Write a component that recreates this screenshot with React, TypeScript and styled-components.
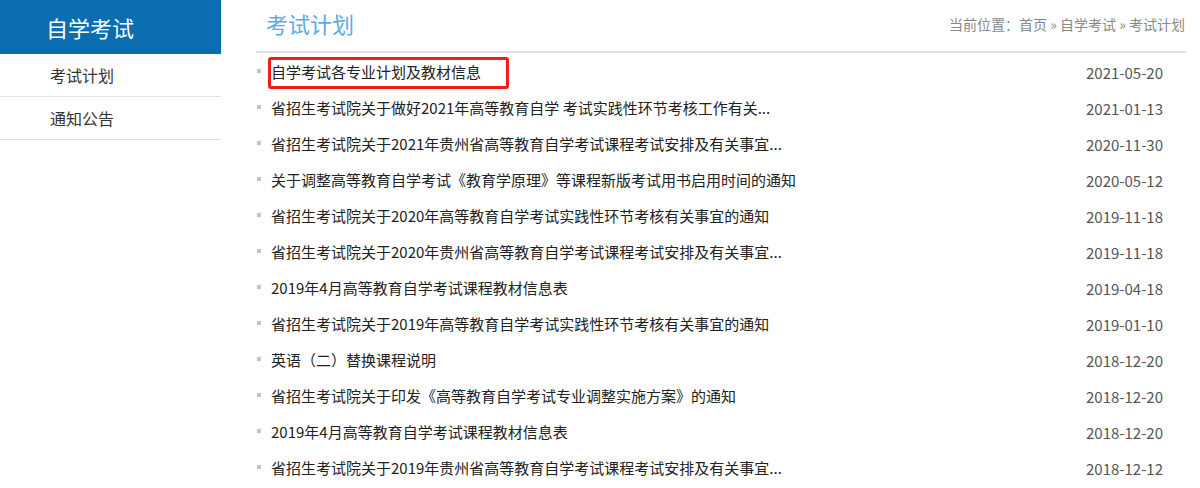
import React from "react";
import styled, { createGlobalStyle } from "styled-components";

const GlobalStyle = createGlobalStyle`
  html, body {
    margin: 0;
    padding: 0;
    background: #fff;
  }
  body {
    font-family: "Noto Sans CJK SC", "Noto Sans", sans-serif;
    color: #333;
  }
  ul {
    margin: 0;
    padding: 0;
    list-style: none;
  }
`;

const navItems = ["考试计划", "通知公告"];

const articles = [
  { title: "自学考试各专业计划及教材信息", date: "2021-05-20", marked: true },
  { title: "省招生考试院关于做好2021年高等教育自学 考试实践性环节考核工作有关...", date: "2021-01-13" },
  { title: "省招生考试院关于2021年贵州省高等教育自学考试课程考试安排及有关事宜...", date: "2020-11-30" },
  { title: "关于调整高等教育自学考试《教育学原理》等课程新版考试用书启用时间的通知", date: "2020-05-12" },
  { title: "省招生考试院关于2020年高等教育自学考试实践性环节考核有关事宜的通知", date: "2019-11-18" },
  { title: "省招生考试院关于2020年贵州省高等教育自学考试课程考试安排及有关事宜...", date: "2019-11-18" },
  { title: "2019年4月高等教育自学考试课程教材信息表", date: "2019-04-18" },
  { title: "省招生考试院关于2019年高等教育自学考试实践性环节考核有关事宜的通知", date: "2019-01-10" },
  { title: "英语（二）替换课程说明", date: "2018-12-20" },
  { title: "省招生考试院关于印发《高等教育自学考试专业调整实施方案》的通知", date: "2018-12-20" },
  { title: "2019年4月高等教育自学考试课程教材信息表", date: "2018-12-20" },
  { title: "省招生考试院关于2019年贵州省高等教育自学考试课程考试安排及有关事宜...", date: "2018-12-12" },
];

export default function App() {
  return (
    <>
      <GlobalStyle />
      <Page>
        <Sidebar>
          <SideHeader>自学考试</SideHeader>
          <SideNav>
            {navItems.map((item) => (
              <SideItem key={item}>{item}</SideItem>
            ))}
          </SideNav>
        </Sidebar>
        <Main>
          <TitleBar>
            <Title>考试计划</Title>
            <Crumbs>
              当前位置：<span>首页</span> » <span>自学考试</span> » <span>考试计划</span>
            </Crumbs>
          </TitleBar>
          <ArticleList>
            {articles.map((a, i) => (
              <ArticleRow key={i}>
                <ArticleTitle $marked={a.marked}>{a.title}</ArticleTitle>
                <ArticleDate>{a.date}</ArticleDate>
              </ArticleRow>
            ))}
          </ArticleList>
        </Main>
      </Page>
    </>
  );
}

const Page = styled.div`
  display: flex;
  align-items: flex-start;
  gap: 35px;
  width: 1186px;
`;

const Sidebar = styled.aside`
  width: 221px;
  flex-shrink: 0;
`;

const SideHeader = styled.div`
  height: 54px;
  background-color: #0a6daf;
  color: #fff;
  font-size: 22px;
  line-height: 54px;
  padding-left: 46px;
`;

const SideNav = styled.ul``;

const SideItem = styled.li`
  height: 42px;
  line-height: 42px;
  padding-left: 50px;
  font-size: 16px;
  color: #333;
  border-bottom: 1px solid #e2e2e2;
`;

const Main = styled.section`
  flex: 1;
`;

const TitleBar = styled.div`
  display: flex;
  align-items: center;
  justify-content: space-between;
  height: 45px;
  padding: 0 1px 6px 10px;
  border-bottom: 2px solid #e3e3e3;
`;

const Title = styled.h2`
  margin: 0;
  font-size: 22px;
  font-weight: 400;
  color: #5aabe8;
`;

const Crumbs = styled.div`
  font-size: 14px;
  color: #888;
  padding-top: 2px;
`;

const ArticleList = styled.ul`
  padding-top: 1px;
`;

const ArticleRow = styled.li`
  display: flex;
  align-items: center;
  justify-content: space-between;
  height: 36px;
  padding-right: 23px;
  position: relative;

  &::before {
    content: "";
    position: absolute;
    left: 1px;
    top: 50%;
    width: 4px;
    height: 4px;
    margin-top: -3px;
    background: #c4c4c4;
  }
`;

const ArticleTitle = styled.a<{ $marked?: boolean }>`
  display: inline-block;
  margin-left: 15px;
  font-size: 15px;
  line-height: 20px;
  color: #222;
  position: relative;

  &::after {
    content: "";
    display: ${(p) => (p.$marked ? "block" : "none")};
    position: absolute;
    left: -3px;
    top: -5px;
    width: 241px;
    height: 32px;
    border: 3px solid #f21c1c;
    border-radius: 3px;
    box-sizing: border-box;
  }
`;

const ArticleDate = styled.span`
  font-size: 15px;
  color: #555;
`;
